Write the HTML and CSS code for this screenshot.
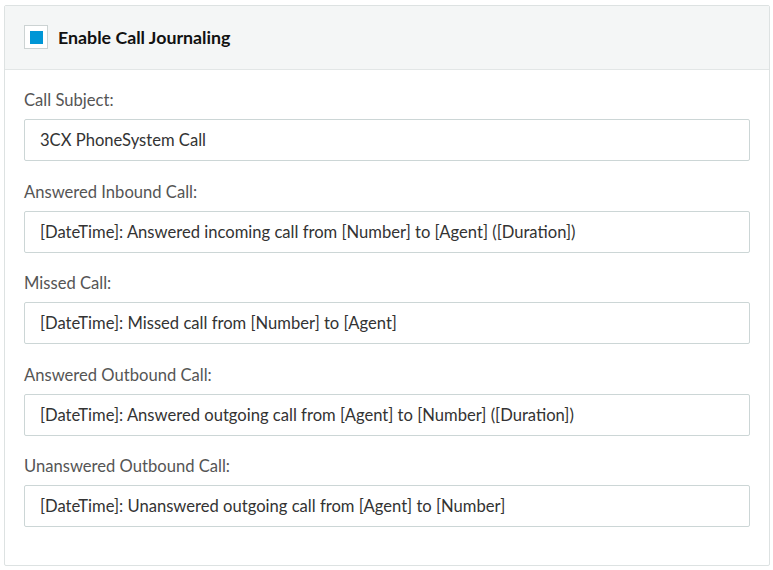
FILE: index.html
```html
<!DOCTYPE html>
<html>
<head>
<meta charset="utf-8">
<link rel="stylesheet" href="styles.css">
</head>
<body>
<div class="panel">
  <div class="panel-head">
    <span class="check"><span class="check-fill"></span></span>
    <span class="title">Enable Call Journaling</span>
  </div>
  <div class="panel-body">
    <div class="field">
      <div class="label">Call Subject:</div>
      <div class="input">3CX PhoneSystem Call</div>
    </div>
    <div class="field">
      <div class="label">Answered Inbound Call:</div>
      <div class="input">[DateTime]: Answered incoming call from [Number] to [Agent] ([Duration])</div>
    </div>
    <div class="field">
      <div class="label">Missed Call:</div>
      <div class="input">[DateTime]: Missed call from [Number] to [Agent]</div>
    </div>
    <div class="field">
      <div class="label">Answered Outbound Call:</div>
      <div class="input">[DateTime]: Answered outgoing call from [Agent] to [Number] ([Duration])</div>
    </div>
    <div class="field">
      <div class="label">Unanswered Outbound Call:</div>
      <div class="input">[DateTime]: Unanswered outgoing call from [Agent] to [Number]</div>
    </div>
  </div>
</div>
</body>
</html>
```
FILE: styles.css
```css
html, body {
  margin: 0;
  background: #ffffff;
}
body {
  padding: 5px 3px 5px 4px;
  font-family: Lato, "Open Sans", sans-serif;
  font-size: 16.6px;
  color: #333333;
}
.panel {
  border: 1px solid #dde2e2;
  border-radius: 2px;
  background: #ffffff;
}
.panel-head {
  display: flex;
  align-items: center;
  gap: 10px;
  padding: 19px 19px 20px 19px;
  height: 24px;
  background: #f4f6f6;
  border-bottom: 1px solid #e2e6e6;
}
.check {
  width: 24px;
  height: 24px;
  box-sizing: border-box;
  border: 1px solid #ccd3d3;
  background: #ffffff;
  display: flex;
  align-items: center;
  justify-content: center;
}
.check-fill {
  width: 13px;
  height: 13px;
  background: #0096d6;
}
.title {
  font-weight: bold;
  font-size: 17.8px;
  color: #111111;
}
.panel-body {
  padding: 20px 19px 38px 19px;
  display: flex;
  flex-direction: column;
  gap: 20.5px;
}
.label {
  line-height: 20px;
  color: #555555;
  margin-bottom: 9px;
}
.input {
  height: 42px;
  box-sizing: border-box;
  border: 1px solid #ccd6d6;
  border-radius: 2px;
  padding: 0 15px;
  display: flex;
  align-items: center;
  color: #333333;
  white-space: nowrap;
}
```
